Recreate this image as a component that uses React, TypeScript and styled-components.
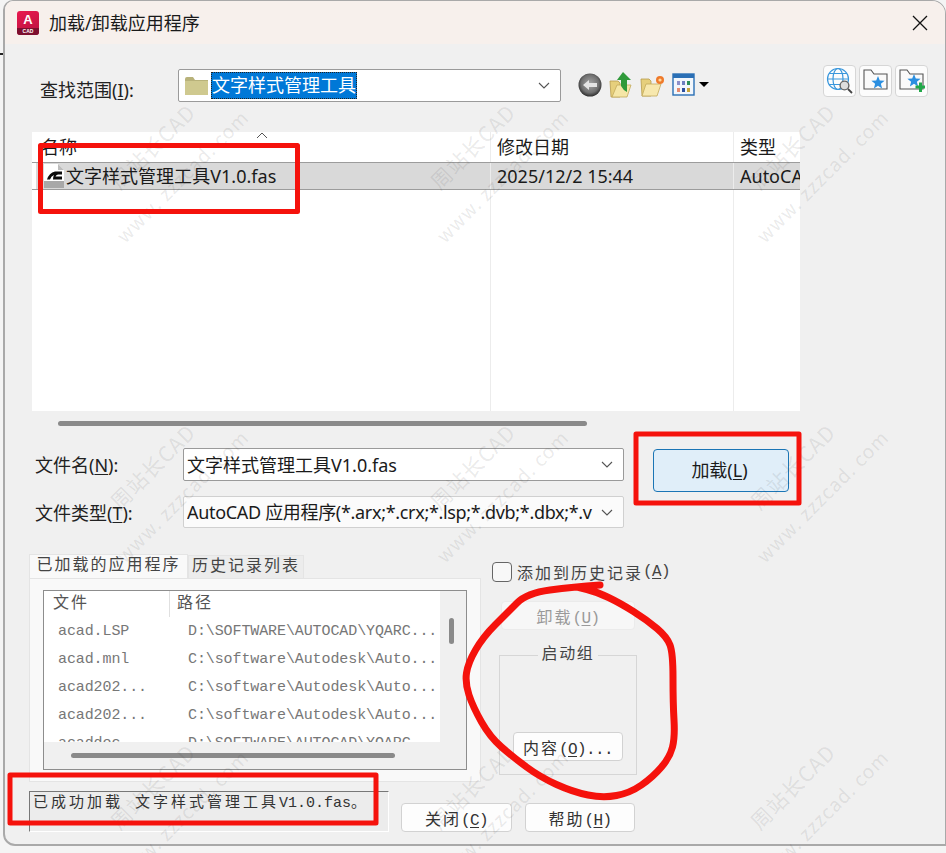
import React from "react";
import styled, { createGlobalStyle } from "styled-components";

const UI = `"Noto Sans", "Noto Sans CJK SC", sans-serif`;
const MONO = `"Liberation Mono", "Noto Sans CJK SC", monospace`;

const Global = createGlobalStyle`
  html, body { margin: 0; padding: 0; width: 946px; height: 853px; overflow: hidden; background: #f4f4f4; }
  * { box-sizing: border-box; }
  #root { width: 946px; height: 853px; position: relative; overflow: hidden; }
`;

const Win = styled.div`
  margin-left: 3px; width: 943px; height: 846px;
  border: 1px solid #a9a9a9; border-left-width: 2px; border-bottom-width: 2px;
  border-radius: 10px 14px 0 12px; background: #f0f0f0; overflow: hidden;
  font-family: ${UI}; color: #1c1c1c; display: flex; flex-direction: column;
`;
const StrayMark = styled.div`position: absolute; left: 0; top: 53px; width: 3px; height: 2px; background: #222;`;
const TitleBar = styled.div`
  height: 43px; flex: none; background: #f7f0ec; display: flex; align-items: center; padding: 0 17px 0 12px;
`;
const Title = styled.div`
  margin-left: 10px; font-size: 18px; line-height: 22px; flex: 1; color: #1a1a1a;
`;
const LogoBox = styled.div`
  width: 22px; height: 24px; border-radius: 3px; overflow: hidden; display: flex; flex-direction: column;
  background: linear-gradient(160deg, #e8194f, #b8123f); color: #fff; align-items: center; font-family: "Liberation Sans", sans-serif;
`;
const LogoA = styled.span`font-size: 13px; line-height: 17px; font-weight: 700;`;
const LogoCad = styled.span`
  font-size: 5px; line-height: 7px; font-weight: 700; width: 100%; text-align: center; background: #7d0f2f;
`;

const LookRow = styled.div`
  height: 88px; flex: none; padding: 21px 17px 0 35px; display: flex; align-items: flex-start;
`;
const Label = styled.label<{ $w: number }>`
  width: ${(p) => p.$w}px; flex: none; font-size: 18px; line-height: 24px; color: #222; white-space: nowrap; padding-top: 1px;
`;
const LookLabel = styled(Label)`margin-top: 12px;`;
const Key = styled.span`text-decoration: underline; text-underline-offset: 2px;`;
const Cjk = styled.span`letter-spacing: 2px;`;

const Combo = styled.div<{ $w: number; $soft?: boolean }>`
  width: ${(p) => p.$w}px; flex: none; background: ${(p) => (p.$soft ? "#fbfbfb" : "#fff")};
  border: 1px solid ${(p) => (p.$soft ? "#d0d0d0" : "#9a9a9a")}; border-radius: 2px;
  display: flex; align-items: center; padding-left: 3px; padding-right: 10px; overflow: hidden;
`;
const LookCombo = styled(Combo)`height: 33px; margin-top: 4px; padding-left: 6px;`;
const FieldCombo = styled(Combo)<{ $h: number }>`height: ${(p) => p.$h}px;`;
const Value = styled.span<{ $tight?: boolean }>`
  flex: 1; font-size: 18px; line-height: 26px; white-space: nowrap; overflow: hidden; color: #1a1a1a;
  letter-spacing: ${(p) => (p.$tight ? "-0.32px" : "0")};
`;
const Selected = styled.span`
  margin-left: 3px; flex: none; height: 27px; line-height: 26px; font-size: 18px; color: #fff; background: #0078d7;
  outline: 1px dotted #222; outline-offset: -1px; padding: 0 1px;
`;
const Spacer = styled.span`flex: 1;`;

const Tools = styled.div`
  display: flex; align-items: center; margin-left: 17px; margin-top: 3px; height: 34px; gap: 7px;
`;
const RightTools = styled.div`margin-left: auto; display: flex; gap: 3px;`;
const IconBtn = styled.button`
  width: 33px; height: 32px; padding: 0; background: #fcfcfc; border: 1px solid #d6d6d6; border-radius: 4px;
  display: flex; align-items: center; justify-content: center;
`;

const FileList = styled.div`
  height: 279px; width: 768px; margin-left: 27px; flex: none; background-color: #fff; overflow: hidden;
  background-image: linear-gradient(#ececec, #ececec), linear-gradient(#ececec, #ececec);
  background-size: 1px 100%, 1px 100%; background-position: 458px 0, 701px 0; background-repeat: no-repeat;
`;
const FileGrid = styled.div<{ $sel?: boolean }>`
  display: grid; grid-template-columns: 458px 243px 67px; height: ${(p) => (p.$sel ? 28 : 30)}px;
  font-size: 18px; line-height: 26px; color: #1a1a1a;
  ${(p) => p.$sel && `background: linear-gradient(90deg, #fff 4px, #d9d9d9 4px); border-top: 1px solid #9c9c9c; border-bottom: 1px solid #9c9c9c;`}
`;
const FileCell = styled.div<{ $first?: boolean; $pad?: number }>`
  padding-left: ${(p) => p.$pad ?? (p.$first ? 12 : 6)}px; white-space: nowrap; overflow: hidden; display: flex; align-items: center;
  position: relative;
  ${(p) => !p.$first && `border-left: 1px solid #ececec;`}
`;
const SortMark = styled.span`
  position: absolute; left: 224px; top: 0; width: 12px; height: 8px; line-height: 0;
`;
const FileName = styled.span`margin-left: 2px; letter-spacing: 0.02px;`;

const HScroll = styled.div`height: 37px; flex: none; padding: 10px 0 0 53px;`;
const Thumb = styled.div<{ $w: number }>`
  width: ${(p) => p.$w}px; height: 5px; border-radius: 3px; background: #8a8a8a;
`;

const FormArea = styled.div`
  height: 106px; flex: none; display: flex; padding-left: 30px;
`;
const Fields = styled.div`display: flex; flex-direction: column; gap: 15px; width: 589px;`;
const FieldRow = styled.div`display: flex; align-items: center;`;
const LoadBtn = styled.button`
  width: 136px; height: 43px; margin: 1px 0 0 29px; border: 1px solid #1b75b5; border-radius: 4px; background: #e0eef9;
  font-family: ${UI}; font-size: 18px; color: #1a1a1a; padding: 0 3px 3px 0;
`;

const Lower = styled.div`
  height: 227px; flex: none; display: flex; padding-left: 24px;
`;
const TabsCol = styled.div`width: 452px; display: flex; flex-direction: column;`;
const TabStrip = styled.div`display: flex; height: 24px; flex: none; align-items: flex-end; font-family: ${MONO};`;
const Tab = styled.div<{ $on?: boolean; $w: number }>`
  width: ${(p) => p.$w}px; height: ${(p) => (p.$on ? 24 : 23)}px; background: ${(p) => (p.$on ? "#f9f9f9" : "#ececec")};
  font-size: 16px; letter-spacing: 2px; line-height: 22px; text-align: center; color: #444; white-space: nowrap;
  border: 1px solid #e4e4e4; border-bottom: 0;
`;
const TabPanel = styled.div`
  flex: 1; background: #f9f9f9; border: 1px solid #e4e4e4; padding: 11px 13px;
`;
const AppList = styled.div`
  width: 424px; height: 180px; border: 1px solid #8d8d8d; background: #f0f0f0; display: grid;
  grid-template-columns: 396px 26px; grid-template-rows: 151px 27px; font-family: ${MONO};
`;
const AppBody = styled.div`background: #fff; overflow: hidden;`;
const AppHead = styled.div`
  display: grid; grid-template-columns: 126px 1fr; height: 25px; font-size: 16px; letter-spacing: 2px; line-height: 26px; color: #555;
`;
const HeadCell = styled.div<{ $last?: boolean }>`
  padding-left: ${(p) => (p.$last ? 7 : 9)}px;
  ${(p) => !p.$last && `border-right: 1px solid #e0e0e0;`}
`;
const AppRow = styled.div`
  display: grid; grid-template-columns: 130px 1fr; height: 28px; padding-left: 14px; font-size: 15px; letter-spacing: -0.1px; line-height: 32px; color: #777; white-space: nowrap; overflow: hidden;
`;
const VBar = styled.div`padding: 27px 0 0 9px;`;
const VThumb = styled.div`width: 5px; height: 26px; border-radius: 3px; background: #8a8a8a;`;
const HBar = styled.div`padding: 11px 0 0 27px;`;

const SideCol = styled.div`margin-left: 11px; width: 180px; display: flex; flex-direction: column; padding-top: 8px;`;
const CheckLine = styled.label`
  display: flex; align-items: center; height: 20px; font-family: ${MONO}; font-size: 16px; letter-spacing: -0.6px; color: #444; white-space: nowrap;
`;
const CheckBox = styled.span`
  width: 20px; height: 20px; border: 1px solid #666; border-radius: 4px; background: #f8f8f8; flex: none; margin-right: 5px;
`;
const MonoBtn = styled.button<{ $w: number; $off?: boolean }>`
  width: ${(p) => p.$w}px; height: 29px; background: ${(p) => (p.$off ? "#f7f7f7" : "#fdfdfd")};
  border: 1px solid ${(p) => (p.$off ? "#ebebeb" : "#d2d2d2")}; border-radius: 4px; padding: 0; white-space: nowrap;
  font-family: ${MONO}; font-size: 16px; letter-spacing: -0.6px; color: ${(p) => (p.$off ? "#9a9a9a" : "#333")};
`;
const UnloadBtn = styled(MonoBtn)`margin: 19px 0 0 9px;`;
const Group = styled.fieldset`
  margin: 15px 0 0 7px; width: 137px; height: 130px; padding: 0 13px; border: 1px solid #d6d6d6;
  font-family: ${MONO};
`;
const Legend = styled.legend`
  font-size: 16px; letter-spacing: 1.6px; color: #444; padding: 0 4px; margin: 0 auto; line-height: 20px;
`;
const GroupBtn = styled(MonoBtn)`margin-top: 67px; display: block;`;

const Bottom = styled.div`
  height: 41px; flex: none; margin-top: 10px; display: flex; align-items: flex-end; padding-left: 24px; font-family: ${MONO};
`;
const Status = styled.div`
  width: 360px; height: 41px; background: #ececec; border-top: 1px solid #777; border-left: 1px solid #777;
  border-right: 1px solid #fff; border-bottom: 1px solid #fff;
  font-size: 15px; line-height: 24px; padding: 0 0 0 3px; white-space: nowrap; color: #333;
`;
const StatusCjk = styled.span`letter-spacing: 3px;`;
const BottomBtn = styled(MonoBtn)`margin-left: 13px; &:first-of-type { margin-left: 12px; }`;

const Overlay = styled.div`position: absolute; inset: 0; pointer-events: none;`;
const MarkGrid = styled(Overlay)`
  display: grid; grid-template-columns: repeat(3, 320px); grid-auto-rows: 320px;
`;
const MarkTile = styled.div`position: relative; overflow: visible;`;
const MarkText = styled.div`
  position: absolute; left: 62px; top: 120px; width: 210px; transform: rotate(-45deg); transform-origin: 50% 50%;
  color: rgba(60, 60, 60, 0.11); font-family: "Noto Sans CJK SC", sans-serif; text-align: center; white-space: nowrap;
`;
const MarkLine = styled.div<{ $size: number }>`
  font-size: ${(p) => p.$size}px; line-height: 41px; letter-spacing: 1px;
`;
const Annot = styled.svg`position: absolute; left: 0; top: 0; width: 946px; height: 853px;`;

const FolderIcon = () => (
  <svg width="23" height="18" viewBox="0 0 23 18">
    <path d="M0 2 Q0 0 2 0 H8 L10 3 H23 V18 H0Z" fill="#b8b27a" />
    <rect x="0" y="4" width="23" height="14" fill="#cfc98f" />
  </svg>
);
const Chevron = () => (
  <svg width="12" height="7" viewBox="0 0 12 7" style={{ flex: "none" }}>
    <path d="M1 1 L6 6 L11 1" fill="none" stroke="#555" strokeWidth="1.1" />
  </svg>
);
const BackIcon = () => (
  <svg width="24" height="24" viewBox="0 0 24 24">
    <defs>
      <radialGradient id="bk" cx="50%" cy="45%" r="55%">
        <stop offset="0" stopColor="#a8a8a8" />
        <stop offset="0.7" stopColor="#707070" />
        <stop offset="1" stopColor="#2e2e2e" />
      </radialGradient>
    </defs>
    <circle cx="12" cy="12" r="11.5" fill="url(#bk)" />
    <path d="M5 12 L11 7 V10 H19 V14 H11 V17Z" fill="#e4e4e4" />
  </svg>
);
const UpIcon = () => (
  <svg width="24" height="26" viewBox="0 0 24 26">
    <path d="M1 9 H9 L11 11 V25 L2 25Z" fill="#e6cf7c" stroke="#b79c4c" strokeWidth="0.8" />
    <path d="M3 25 L8 13 H22 L18 25Z" fill="#f5e6a6" stroke="#c3aa5c" strokeWidth="0.8" />
    <path d="M14 0 L22 8 H18 V20 Q14 18 12 14 V8 H8Z" fill="#2f9a3a" />
  </svg>
);
const NewFolderIcon = () => (
  <svg width="25" height="23" viewBox="0 0 25 23">
    <path d="M1 5 H9 L11 7 V22 H2Z" fill="#e6cf7c" stroke="#b79c4c" strokeWidth="0.8" />
    <path d="M2 22 L6 10 H21 L17 22Z" fill="#f7e8ae" stroke="#c3aa5c" strokeWidth="0.8" />
    <circle cx="20" cy="6" r="4" fill="#ef7a2a" />
    <circle cx="20" cy="6" r="1.6" fill="#ffd9a0" />
  </svg>
);
const ViewsIcon = () => (
  <svg width="38" height="24" viewBox="0 0 38 24">
    <rect x="1" y="1" width="21" height="21" fill="#f2f6fb" stroke="#2a6fb5" strokeWidth="1.4" />
    <rect x="1" y="1" width="21" height="4" fill="#2a6fb5" />
    {[
      [5, 8, "#8d8fc9"], [10, 8, "#6f7fc0"], [15, 8, "#2f8f5a"],
      [5, 15, "#e58a6e"], [10, 15, "#2c4f9e"], [15, 15, "#c9a437"],
    ].map(([x, y, c], i) => (
      <rect key={i} x={x as number} y={y as number} width="3" height="4" fill={c as string} />
    ))}
    <path d="M27 9 H37 L32 14Z" fill="#000" />
  </svg>
);
const GlobeIcon = () => (
  <svg width="28" height="28" viewBox="0 0 28 28">
    <g fill="none" stroke="#3a97dc" strokeWidth="1.2">
      <circle cx="12" cy="12" r="10.5" />
      <ellipse cx="12" cy="12" rx="5" ry="10.5" />
      <path d="M1.5 12 H22.5 M3 6.5 H21 M3 17.5 H15" />
    </g>
    <circle cx="18.5" cy="18.5" r="4.4" fill="#ddd" stroke="#666" strokeWidth="1.4" />
    <path d="M22 22 L26 26" stroke="#444" strokeWidth="1.8" />
  </svg>
);
const StarFolderIcon = ({ plus }: { plus?: boolean }) => (
  <svg width="28" height="26" viewBox="0 0 28 26">
    <path d="M2 5 V21 H25 V6 H12 L9 2 H2 Z" fill="#fafafa" stroke="#555" strokeWidth="1.1" />
    <path
      d={plus
        ? "M16 6 L17.8 10.6 L22.6 10.8 L18.9 13.8 L20.1 18.4 L16 15.8 L11.9 18.4 L13.1 13.8 L9.4 10.8 L14.2 10.6Z"
        : "M16 8 L17.8 12.6 L22.6 12.8 L18.9 15.8 L20.1 20.4 L16 17.8 L11.9 20.4 L13.1 15.8 L9.4 12.8 L14.2 12.6Z"}
      fill="#2b8fe0"
    />
    {plus && <path d="M19 15.5 h3.5 v-3 h3 v3 h3 v3 h-3 v3.5 h-3 v-3.5 h-3.5z" fill="#22a84a" transform="translate(-1.5 2)" />}
  </svg>
);
const FasIcon = () => (
  <svg width="20" height="24" viewBox="0 0 20 24" style={{ flex: "none" }}>
    <path d="M0 0 H14 L20 6 V24 H0Z" fill="#fff" />
    <path d="M14 0 V6 H20Z" fill="#bdbdbd" />
    <path d="M0 17 H20 V24 H0Z" fill="#a8a8a8" />
    <path d="M3 15.5 Q5 9 11 7.5 H18 V10.5 H14 Q12 11 11.5 12.5 H18 V15.5 H9 Q9 12.5 10 11 Q7 12 6 15.5Z" fill="#0c0c0c" />
  </svg>
);

const apps: [string, string][] = [
  ["acad.LSP", "D:\\SOFTWARE\\AUTOCAD\\YQARC..."],
  ["acad.mnl", "C:\\software\\Autodesk\\Auto..."],
  ["acad202...", "C:\\software\\Autodesk\\Auto..."],
  ["acad202...", "C:\\software\\Autodesk\\Auto..."],
  ["acaddoc...", "D:\\SOFTWARE\\AUTOCAD\\YQARC..."],
];

const tiles = Array.from({ length: 9 }, (_, i) => i);

const loop: [number, number][] = [
  [600, 585], [573, 587], [527, 593], [507, 613], [483, 637], [468, 663], [465, 683], [473, 707],
  [490, 737], [513, 757], [540, 777], [573, 792], [603, 798], [630, 793], [653, 777], [670, 757],
  [675, 737], [673, 703], [673, 653], [667, 637], [647, 620], [620, 603], [597, 592], [577, 587],
];
const smooth = (pts: [number, number][]) => {
  let d = `M${pts[0][0]} ${pts[0][1]}`;
  for (let i = 1; i < pts.length - 1; i++) {
    const mx = (pts[i][0] + pts[i + 1][0]) / 2;
    const my = (pts[i][1] + pts[i + 1][1]) / 2;
    d += ` Q${pts[i][0]} ${pts[i][1]} ${mx} ${my}`;
  }
  const last = pts[pts.length - 1];
  return d + ` L${last[0]} ${last[1]}`;
};

export default function App() {
  return (
    <>
      <Global />
      <Win>
        <TitleBar>
          <LogoBox>
            <LogoA>A</LogoA>
            <LogoCad>CAD</LogoCad>
          </LogoBox>
          <Title>加载/卸载应用程序</Title>
          <svg width="16" height="16" viewBox="0 0 16 16">
            <path d="M1 1 L15 15 M15 1 L1 15" stroke="#111" strokeWidth="1.3" />
          </svg>
        </TitleBar>

        <LookRow>
          <LookLabel $w={138}>查找范围(<Key>I</Key>):</LookLabel>
          <LookCombo $w={383}>
            <FolderIcon />
            <Selected>文字样式管理工具</Selected>
            <Spacer />
            <Chevron />
          </LookCombo>
          <Tools>
            <BackIcon />
            <UpIcon />
            <NewFolderIcon />
            <ViewsIcon />
          </Tools>
          <RightTools>
            <IconBtn><GlobeIcon /></IconBtn>
            <IconBtn><StarFolderIcon /></IconBtn>
            <IconBtn><StarFolderIcon plus /></IconBtn>
          </RightTools>
        </LookRow>

        <FileList>
          <FileGrid>
            <FileCell $first $pad={9}>
              名称
              <SortMark>
                <svg width="12" height="8" viewBox="0 0 12 8">
                  <path d="M1 6 L6 1 L11 6" fill="none" stroke="#555" strokeWidth="1" />
                </svg>
              </SortMark>
            </FileCell>
            <FileCell>修改日期</FileCell>
            <FileCell>类型</FileCell>
          </FileGrid>
          <FileGrid $sel>
            <FileCell $first>
              <FasIcon />
              <FileName>文字样式管理工具V1.0.fas</FileName>
            </FileCell>
            <FileCell>2025/12/2 15:44</FileCell>
            <FileCell>AutoCAD 应用程序</FileCell>
          </FileGrid>
        </FileList>

        <HScroll><Thumb $w={529} /></HScroll>

        <FormArea>
          <Fields>
            <FieldRow>
              <Label $w={148}>文件名(<Key>N</Key>):</Label>
              <FieldCombo $w={441} $h={33}>
                <Value>文字样式管理工具V1.0.fas</Value>
                <Chevron />
              </FieldCombo>
            </FieldRow>
            <FieldRow>
              <Label $w={148}>文件类型(<Key>T</Key>):</Label>
              <FieldCombo $w={441} $h={32} $soft>
                <Value $tight>AutoCAD 应用程序(*.arx;*.crx;*.lsp;*.dvb;*.dbx;*.v</Value>
                <Chevron />
              </FieldCombo>
            </FieldRow>
          </Fields>
          <LoadBtn>加载(<Key>L</Key>)</LoadBtn>
        </FormArea>

        <Lower>
          <TabsCol>
            <TabStrip>
              <Tab $on $w={159}>已加载的应用程序</Tab>
              <Tab $w={116}>历史记录列表</Tab>
            </TabStrip>
            <TabPanel>
              <AppList>
                <AppBody>
                  <AppHead>
                    <HeadCell>文件</HeadCell>
                    <HeadCell $last>路径</HeadCell>
                  </AppHead>
                  {apps.map(([f, p], i) => (
                    <AppRow key={i}>
                      <span>{f}</span>
                      <span>{p}</span>
                    </AppRow>
                  ))}
                </AppBody>
                <VBar><VThumb /></VBar>
                <HBar><Thumb $w={324} /></HBar>
              </AppList>
            </TabPanel>
          </TabsCol>
          <SideCol>
            <CheckLine>
              <CheckBox />
              <Cjk>添加到历史记录</Cjk>(<Key>A</Key>)
            </CheckLine>
            <UnloadBtn $w={134} $off><Cjk>卸载</Cjk>(<Key>U</Key>)</UnloadBtn>
            <Group>
              <Legend>启动组</Legend>
              <GroupBtn $w={110}><Cjk>内容</Cjk>(<Key>O</Key>)...</GroupBtn>
            </Group>
          </SideCol>
        </Lower>

        <Bottom>
          <Status>
            <StatusCjk>已成功加载 文字样式管理工具</StatusCjk>V1.0.fas。
          </Status>
          <BottomBtn $w={111}><Cjk>关闭</Cjk>(<Key>C</Key>)</BottomBtn>
          <BottomBtn $w={110}><Cjk>帮助</Cjk>(<Key>H</Key>)</BottomBtn>
        </Bottom>
      </Win>
      <StrayMark />

      <MarkGrid>
        {tiles.map((i) => (
          <MarkTile key={i}>
            <MarkText>
              <MarkLine $size={21}>周站长CAD</MarkLine>
              <MarkLine $size={19}>www. zzzcad. com</MarkLine>
            </MarkText>
          </MarkTile>
        ))}
      </MarkGrid>

      <Annot viewBox="0 0 946 853">
        <g fill="none" stroke="#f5120c" strokeLinejoin="round" strokeLinecap="round">
          <rect x="40.5" y="145.5" width="257" height="66" strokeWidth="5" />
          <rect x="636" y="434" width="163" height="69" strokeWidth="5" />
          <rect x="10" y="775" width="366" height="48" strokeWidth="5" />
          <path strokeWidth="7" d={smooth(loop)} />
        </g>
      </Annot>
    </>
  );
}
